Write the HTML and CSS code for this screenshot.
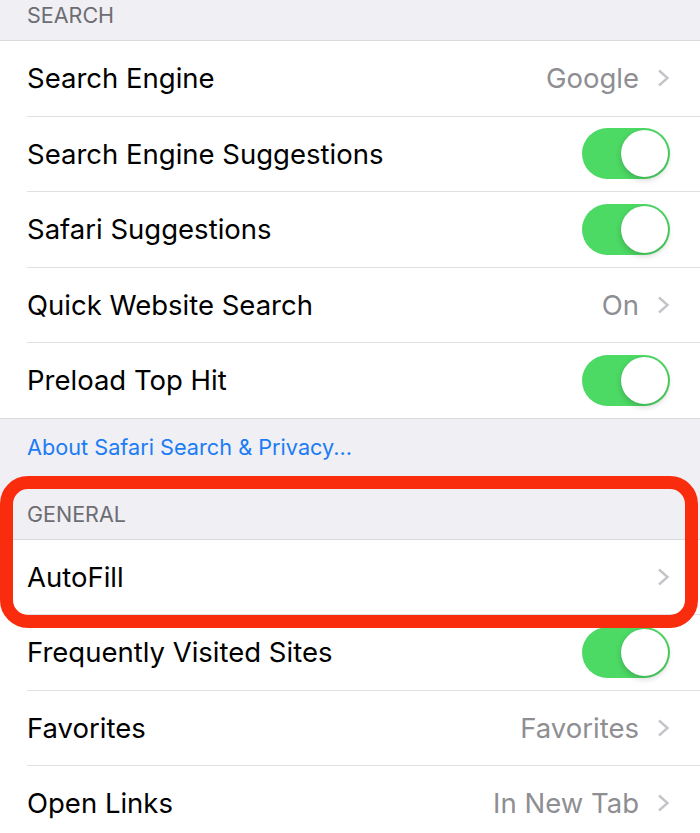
FILE: index.html
```html
<!DOCTYPE html>
<html lang="en">
<head>
  <meta charset="UTF-8">
  <title>Safari Settings</title>
  <link rel="stylesheet" href="styles.css">
</head>
<body>

  <div class="section-header top">SEARCH</div>
  <div class="group">
    <div class="row">
      <div class="row-inner">
        <span class="label">Search Engine</span>
        <span class="detail">Google<svg class="chevron" viewBox="0 0 13 18"><path d="M2 1.5 L10.5 9 L2 16.5"/></svg></span>
      </div>
    </div>
    <div class="row">
      <div class="row-inner">
        <span class="label">Search Engine Suggestions</span>
        <span class="toggle on"><span class="knob"></span></span>
      </div>
    </div>
    <div class="row">
      <div class="row-inner">
        <span class="label">Safari Suggestions</span>
        <span class="toggle on"><span class="knob"></span></span>
      </div>
    </div>
    <div class="row">
      <div class="row-inner">
        <span class="label">Quick Website Search</span>
        <span class="detail">On<svg class="chevron" viewBox="0 0 13 18"><path d="M2 1.5 L10.5 9 L2 16.5"/></svg></span>
      </div>
    </div>
    <div class="row">
      <div class="row-inner">
        <span class="label">Preload Top Hit</span>
        <span class="toggle on"><span class="knob"></span></span>
      </div>
    </div>
  </div>
  <div class="section-footer"><a href="#">About Safari Search &amp; Privacy...</a></div>

  <div class="highlight-wrap">
    <div class="highlight"></div>
    <div class="section-header">GENERAL</div>
    <div class="group">
      <div class="row">
        <div class="row-inner">
          <span class="label">AutoFill</span>
          <span class="detail"><svg class="chevron" viewBox="0 0 13 18"><path d="M2 1.5 L10.5 9 L2 16.5"/></svg></span>
        </div>
      </div>
      <div class="row">
        <div class="row-inner">
          <span class="label">Frequently Visited Sites</span>
          <span class="toggle on"><span class="knob"></span></span>
        </div>
      </div>
      <div class="row">
        <div class="row-inner">
          <span class="label">Favorites</span>
          <span class="detail">Favorites<svg class="chevron" viewBox="0 0 13 18"><path d="M2 1.5 L10.5 9 L2 16.5"/></svg></span>
        </div>
      </div>
      <div class="row">
        <div class="row-inner">
          <span class="label">Open Links</span>
          <span class="detail">In New Tab<svg class="chevron" viewBox="0 0 13 18"><path d="M2 1.5 L10.5 9 L2 16.5"/></svg></span>
        </div>
      </div>
    </div>
  </div>

</body>
</html>
```

FILE: styles.css
```css
body {
  margin: 0;
  font-family: Inter, 'Noto Sans', sans-serif;
  background-color: #efeff4;
  overflow: hidden;
}
.section-header {
  padding: 0 27px 10px;
  line-height: 30px;
  font-size: 21.5px;
  color: #6d6d72;
}
.group {
  background: #fff;
  border-top: 1px solid #d9d9de;
  border-bottom: 1px solid #d9d9de;
}
.row {
  padding-left: 27px;
}
.row-inner {
  height: 75.5px;
  box-sizing: border-box;
  display: flex;
  align-items: center;
  justify-content: space-between;
  border-bottom: 1px solid #e0e0e4;
  padding-right: 30px;
}
.row:last-child .row-inner {
  border-bottom: none;
  height: 74.5px;
}
.label {
  font-size: 27.5px;
  color: #000;
}
.detail {
  display: flex;
  align-items: center;
  gap: 18px;
  font-size: 27.5px;
  color: #8e8e93;
}
.chevron {
  width: 13px;
  height: 18px;
  fill: none;
  stroke: #c4c4c9;
  stroke-width: 2.4;
}
.toggle {
  width: 88px;
  height: 51px;
  border-radius: 26px;
  background: #e5e5ea;
  display: flex;
  align-items: center;
  padding: 2px;
  box-sizing: border-box;
}
.toggle.on {
  background: #4cd964;
  justify-content: flex-end;
}
.knob {
  width: 47px;
  height: 47px;
  border-radius: 50%;
  background: #fff;
  box-shadow: 0 3px 6px rgba(0,0,0,0.18), 0 0 1px rgba(0,0,0,0.15);
}
.section-footer {
  padding: 13px 27px 37px;
  line-height: 30px;
  font-size: 21.7px;
}
.section-footer a {
  color: #1c7cf4;
  text-decoration: none;
}
.highlight-wrap {
  position: relative;
}
.highlight {
  position: absolute;
  top: -23px;
  left: 0;
  width: 698px;
  height: 152px;
  box-sizing: border-box;
  border: 13px solid #fa2c0e;
  border-radius: 28px;
  z-index: 2;
  pointer-events: none;
}
```
